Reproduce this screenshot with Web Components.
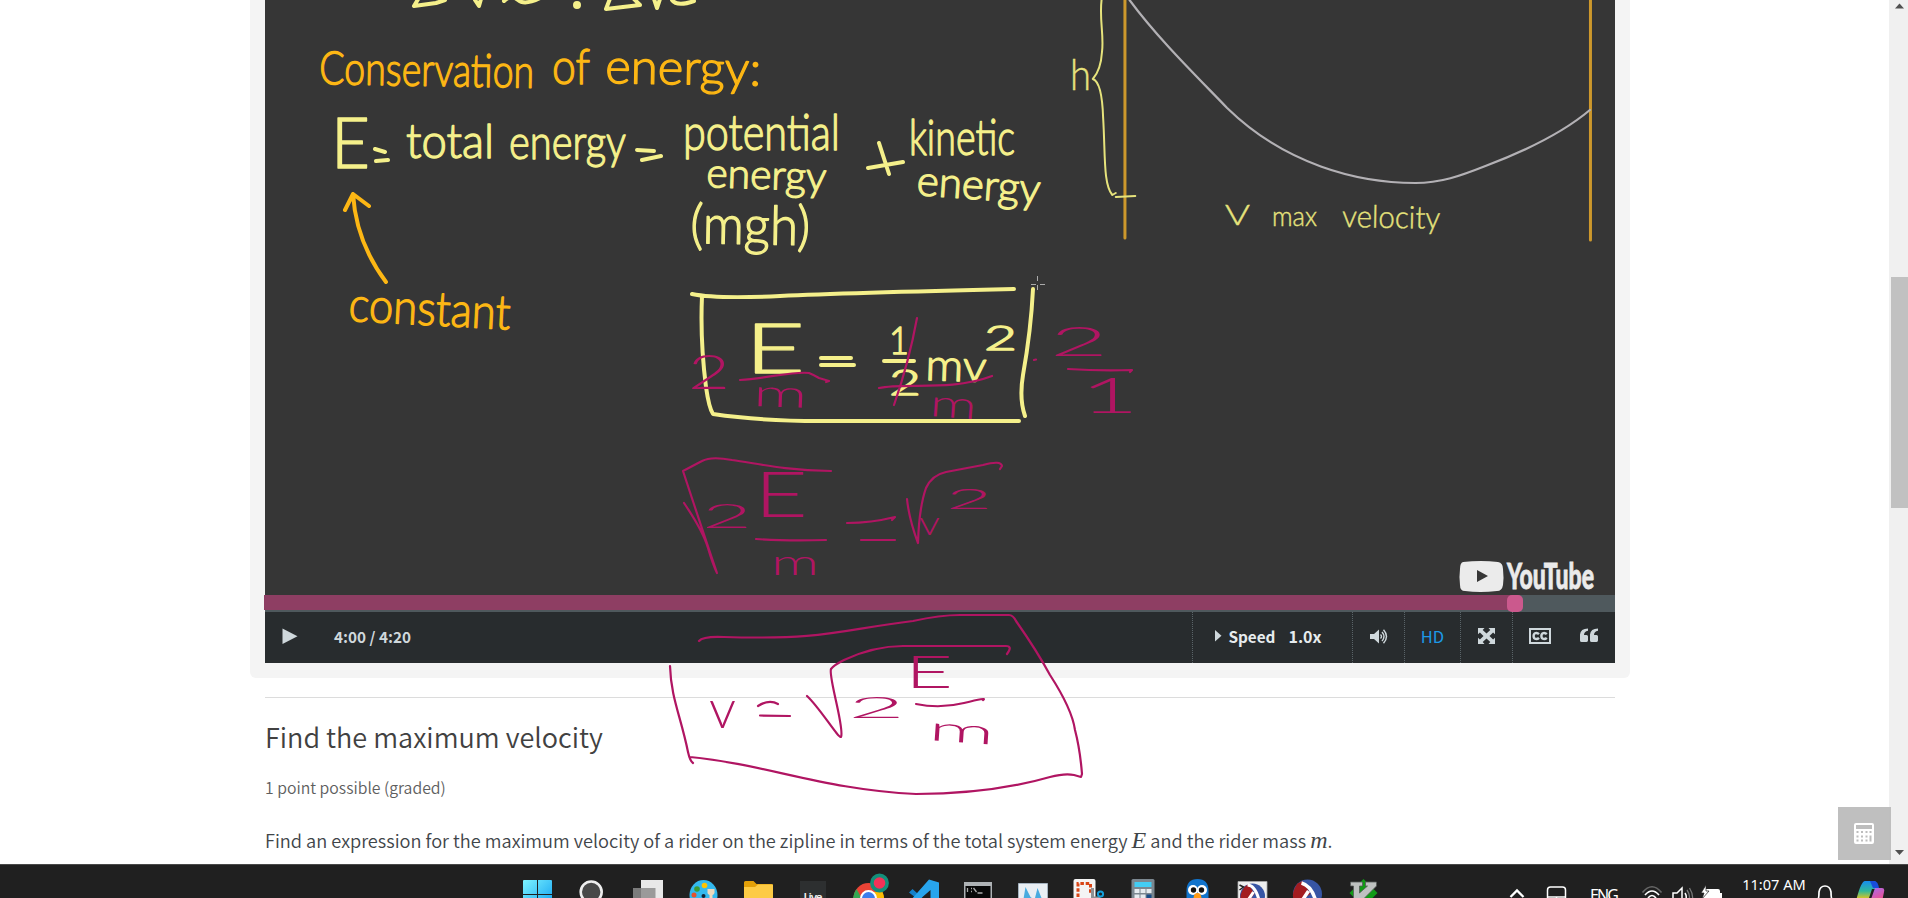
<!DOCTYPE html>
<html lang="en"><head><meta charset="utf-8"><title>Find the maximum velocity</title>
<style>html,body{margin:0;height:100%;overflow:hidden;background:#fff}</style></head>
<body><course-screen></course-screen>
<script>
function define(name, html, after) {
  customElements.define(name, class extends HTMLElement {
    constructor() {
      super();
      const t = document.createElement('template');
      t.innerHTML = html;
      this.attachShadow({mode: 'open'}).append(t.content.cloneNode(true));
      if (after) after(this.shadowRoot, this);
    }
  });
}
// Writes notes as fitted SVG text: [text, x, baseline, width, size, rotation]
function notes(root, sel, list) {
  const g = root.querySelector(sel);
  for (const [s, x, y, w, size, rot] of list) {
    const t = document.createElementNS('http://www.w3.org/2000/svg', 'text');
    t.textContent = s;
    t.setAttribute('x', x); t.setAttribute('y', y);
    t.setAttribute('font-size', size);
    t.setAttribute('textLength', w);
    t.setAttribute('lengthAdjust', 'spacingAndGlyphs');
    if (rot) t.setAttribute('transform', `rotate(${rot} ${x} ${y})`);
    g.append(t);
  }
}

define('video-frame', `
<style>:host{display:block;height:595px;background:#363636}svg{display:block}
text{font-family:Lato,sans-serif}
.pen{font-weight:300;stroke-width:1.300;stroke-linejoin:round}
.l{fill:none;stroke-linecap:round;stroke-linejoin:round}
.l path{vector-effect:non-scaling-stroke}</style>
<svg width="1350" height="595" viewBox="265 0 1350 595">
<g id="orange" class="pen" fill="#fdb714" stroke="#fdb714"></g>
<g id="yellow" class="pen" fill="#f5f08b" stroke="#f5f08b"></g>
<g id="thin" fill="#e6e37c" font-weight="300" stroke="#e6e37c" stroke-width=".4"></g>
<g id="mark" fill="#ebebeb" stroke="#ebebeb" stroke-width=".8" font-weight="900"></g>
<g class="l" stroke="#f5f08b" stroke-width="4">
<path d="M420-4l-6 10 22-3 9-3M475 0l4 6 2-7M504 1q7-7 14-1t24-3M611-4l-5 13 34-4-8-8M654-1l3 9 3-9M672 0q5 7 22 1"/><circle cx="577" cy="5" r="2"/>
<path d="M375 149l10 3M376 161l12-1M637 150l17 1M642 160l19-4M868 168l35-6M879 143l10 31"/>
<path d="M692 294Q716 299 780 296T1014 289M702 296Q700 340 706 387 709 408 713 414 760 421 820 421T1019 421M1033 289Q1031 330 1023 375 1019 399 1025 416"/>
<path d="M821 358h30M821 365h33M884 361h30"/></g>
<path class="l" stroke="#fdb714" stroke-width="4" d="M386 282Q356 242 353 194M345 210l8-16 16 12"/>
<g class="l" transform="translate(1040) scale(1.148 1) translate(-1040)">
<path stroke="#cd982c" stroke-width="3" d="M1114 0V238M1519.500 0V240"/>
<path stroke="#b3b1b5" stroke-width="2.200" d="M1118 0C1143 39 1178 78 1203 108C1253 164 1316 183 1367 183C1389 183 1406 176 1428 166Q1488 140 1519 110"/>
<path stroke="#e6e37c" stroke-width="2" d="M1094-3C1091 16 1096 35 1094 52Q1093 70 1086 79Q1094 82 1095 118C1097 155 1095 184 1103 195l3-2M1106 197l17-1"/></g>
<path stroke="#aaa" stroke-width="1" stroke-dasharray="5 4" d="M1037.500 276v15M1031 284.500h14"/>
<path fill="#ebebeb" fill-rule="evenodd" d="M1463 562q18-2 35 0 5 1 5 7 1 9 0 16-1 6-6 6-17 2-32 0-5 0-5-6-1-9 0-16 0-6 3-7zM1477 570v12l11-6z"/>
</svg>`, r => {
  notes(r, '#orange', [
    ['Conservation', 319, 84, 215, 46, 1], ['of', 552, 84, 38, 50], ['energy:', 605, 83, 156, 48, 1],
    ['constant', 348, 321, 162, 48, 3]]);
  notes(r, '#yellow', [
    ['E', 331, 168, 39, 70], ['total', 406, 158, 88, 48], ['energy', 509, 159, 117, 48],
    ['potential', 683, 150, 157, 50], ['energy', 706, 187, 120, 41, 2], ['(mgh)', 690, 243, 120, 54, 1],
    ['kinetic', 909, 155, 106, 50], ['energy', 916, 195, 124, 42, 4],
    ['E', 745, 373, 60, 68], ['1', 889, 354, 20, 38], ['2', 889, 395, 32, 36],
    ['mv', 925, 380, 61, 44, 2], ['2', 984, 350, 33, 34]]);
  notes(r, '#thin', [
    ['h', 1070, 90, 21, 44], ['V', 1225, 225, 25, 28], ['max', 1272, 226, 45, 28], ['velocity', 1342, 227, 98, 31, 1]]);
  notes(r, '#mark', [['YouTube', 1507, 589, 87, 36]]);
});

define('player-slider', `
<style>:host{display:flex;height:17px;background:#4f595d;position:relative}
.done{width:1251px;height:15px;margin-left:-1px;background:#8e3e63}
.knob{width:16px;height:17px;border-radius:5px;background:#cb598d;margin-left:-8px}</style>
<div class="done"></div><div class="knob"></div>`);

define('player-button', `
<style>:host{display:flex;align-items:center;justify-content:center;height:51px;box-sizing:border-box}
:host([split]){border-left:1px dotted #5a6468}</style><slot></slot>`);

define('player-controls', `
<style>:host{display:flex;height:51px;background:#282c2e;color:#cfd8dc;font:bold 15.300px "Noto Sans CJK SC",sans-serif}
.time{margin-left:19px;width:858px;justify-content:flex-start}
span{line-height:20px;white-space:pre;margin-bottom:4px}svg{display:block;fill:#cfd8dc;margin-bottom:2px}
.speed{color:#e7ecee}</style>
<player-button style="width:50px"><svg width="16" height="17" viewBox="0 0 16 17"><path d="M.500.500v15.500l15-7.700z"/></svg></player-button>
<player-button class="time"><span>4:00 / 4:20</span></player-button>
<player-button split style="width:160px" class="speed"><svg width="7" height="12" viewBox="0 0 7 12" style="margin:0 6px 4px -8px"><path d="M0 0v11.500l6.500-5.700z"/></svg><span>Speed</span><span style="margin-left:13px;font-size:16px">1.0x</span></player-button>
<player-button split style="width:52px"><svg width="18" height="15" viewBox="0 0 18 15"><path d="M0 5h4l5-4.500v14L4 10H0z"/><path fill="none" stroke="#cfd8dc" stroke-width="1.400" d="M10.500 5.500q2 2 0 4M12 3q4 4.500 0 9M13.500.800q6 6.700 0 13.400"/></svg></player-button>
<player-button split style="width:56px;color:#1c9ae8;font:16.500px 'Noto Sans CJK SC',sans-serif"><span>HD</span></player-button>
<player-button split style="width:52px"><svg width="17" height="16" viewBox="0 0 17 16" style="margin-bottom:4px"><path d="M0 0h6.500L4.700 1.900 8.500 5.600l3.800-3.700L10.500 0H17v6.300l-1.900-1.800L11.500 8l3.600 3.500L17 9.700V16h-6.500l1.800-1.900-3.800-3.700-3.800 3.700L6.500 16H0V9.700l1.900 1.800L5.500 8 1.900 4.500 0 6.300z"/></svg></player-button>
<player-button split style="width:54px"><svg width="22" height="16" viewBox="0 0 22 16" style="margin-bottom:4px"><path fill="none" stroke="#cfd8dc" stroke-width="2" d="M1 1h20v14H1z"/><path fill="none" stroke="#cfd8dc" stroke-width="2.400" d="M10 6.200Q8.500 4.700 6.500 5.100 4.600 5.600 4.600 8t1.900 2.900Q8.500 11.300 10 9.800M17.800 6.200Q16.300 4.700 14.300 5.100 12.400 5.600 12.400 8t1.900 2.900Q16.300 11.300 17.800 9.800"/></svg></player-button>
<player-button style="width:46px"><svg width="18" height="14" viewBox="0 0 18 14" style="margin-bottom:5px"><path d="M8 .500v2.300Q4 3.500 4 7h2.500q1.500 0 1.500 1.500v3.700Q8 14 6.500 14H1.700Q0 14 0 12.500V6.500Q.500.500 8 .500zM18 .500v2.300Q14 3.500 14 7h2.500q1.500 0 1.500 1.500v3.700Q18 14 16.500 14h-4.800Q10 14 10 12.500V6.500Q10.500.500 18 .500z"/></svg></player-button>`);

define('video-player', `
<style>:host{display:block;width:1350px;padding:0 15px 15px;background:#f4f4f4;border-radius:0 0 6px 6px;margin-left:250px}</style>
<video-frame></video-frame><player-slider></player-slider><player-controls></player-controls>`);

define('problem-text', `
<style>:host{display:block;margin:19px 0 0 265px;width:1350px;border-top:1px solid #dcdcdc;font-family:"Noto Sans CJK SC","Noto Sans",sans-serif;color:#414141}
h2{font-size:27.050px;font-weight:350;line-height:36px;margin:21px 0 0;white-space:nowrap}
.p{font-size:15.800px;line-height:22px;margin-top:22px;color:#5e5e5e;font-weight:350}
p{font-size:18.200px;line-height:26px;margin:28px 0 0;white-space:nowrap;color:#3f4549;font-weight:350}
i{font:italic 24px/20px "Liberation Serif",serif}</style>
<h2><span>Find the maximum velocity</span></h2><div class="p"><span>1 point possible (graded)</span></div>
<p><span>Find an expression for the maximum velocity of a rider on the zipline in terms of the total system energy </span><i>E</i><span> and the rider mass </span><i>m</i>.</p>`);

define('page-scrollbar', `
<style>:host{display:flex;flex-direction:column;width:19px;height:864px;background:#f0f0f0}
svg{display:block;margin-left:6px}.thumb{height:231px;width:17px;margin:267px 0 340px 2px;background:#c1c1c1}</style>
<svg width="10" height="10" viewBox="0 0 10 10"><path fill="#505050" d="M0 8.500L4.500 3.500 9 8.500z"/></svg>
<div class="thumb"></div>
<svg width="10" height="16" viewBox="0 0 10 16"><path fill="#505050" d="M0 2L4.500 7 9 2z"/></svg>`);

define('calculator-toggle', `
<style>:host{display:flex;align-items:center;justify-content:center;position:absolute;left:1838px;top:807px;width:53px;height:53px;background:rgba(184,184,184,.9)}</style>
<svg width="20" height="21" viewBox="0 0 20 21" style="margin-right:2px"><rect width="20" height="21" rx="2" fill="#fff"/><g fill="#bdbdbd"><path d="M2 2h16v4H2z"/><path d="M2.500 8h2v2h-2zM7 8h2v2H7zM11.500 8h2v2h-2zM15.500 8h2v2h-2zM2.500 12.500h2v2h-2zM7 12.500h2v2H7zM11.500 12.500h2v2h-2zM15.500 12.500h2v6h-2zM2.500 16.500h2v2h-2zM7 16.500h2v2H7zM11.500 16.500h2v2h-2z"/></g></svg>`);

define('pen-layer', `
<style>:host{display:block;position:absolute;left:0;top:0;width:1889px;height:864px;pointer-events:none}
svg{display:block}path{fill:none;stroke:#b01562;stroke-width:2.200;stroke-linecap:round;stroke-linejoin:round}
text{font-family:Lato,sans-serif;font-weight:300;fill:#b01562}</style>
<svg width="1889" height="864" viewBox="0 0 1889 864">
<path d="M740 380C770 378 793 371 809 373Q814 375 819 378L829 381 826 382M917 318Q909 362 894 405M879 388C905 382 950 392 992 376M1034 360l2-.500M1068 369Q1100 371 1132 370L1130 372"/>
<path d="M684 503Q703 531 708 548T717 573Q710 553 683 471L702 461Q711 456 732 460C760 464 784 470 831 471M756 539Q785 541 826 540M847 523Q871 523 895 517L892 520M861 540H895M907 499Q909 519 918 543Q919 508 926 488Q932 475 946 472L983 465Q1001 460 1002 466L1000 469"/>
<path d="M699 641Q703 636 724 637C828 640 839 630 913 621Q940 615 960 615H1009Q1013 615 1016 621Q1037 651 1050 675Q1072 709 1075 730Q1080 749 1082 774L1081 777 1074 775Q1065 773 1050 777Q991 794 916 794C825 790 765 764 690 757M670 666C671 698 681 717 688 752Q690 761 693 763"/>
<path d="M807 696C820 708 838 738 841 737C845 729 828 676 831 669Q834 665 844 660Q874 646 903 646H1006Q1013 646 1007 654M758 706Q769 699 778 704M760 715.500L790 716M916 704Q940 709 964 703T983 700"/>
<g id="n"></g></svg>`, r => notes(r, '#n', [
  ['2', 688, 389, 42, 48], ['m', 753, 406, 54, 38, 2], ['m', 929, 416, 47, 38, 4],
  ['2', 1050, 356, 58, 41], ['1', 1080, 413, 59, 49],
  ['2', 702, 528, 50, 33], ['E', 754, 517, 54, 63], ['m', 771, 575, 48, 36],
  ['v', 919, 535, 21, 33], ['2', 946, 509, 46, 28],
  ['v', 709, 728, 27, 53], ['2', 848, 718, 57, 29], ['E', 905, 688, 48, 45], ['m', 928, 740, 66, 34, 4]]));

const ART = {
win:'<defs><linearGradient id="w" x2="1" y2="1"><stop stop-color="#7df3ff"/><stop offset="1" stop-color="#0c9cf0"/></linearGradient></defs><path fill="url(#w)" d="M-14.500 17q0-1 1-1H-.500V30H-14.500zM.500 16H13.500q1 0 1 1V30H.500zM-14.500 31H-.500V45H-14.500zM.500 31H14.500V45H.500z"/>',
search:'<circle cx="-1.300" cy="28" r="10.500" fill="#484848" stroke="#eee" stroke-width="2.600"/>',
view:'<path fill="#e8e8e8" d="M-6.500 16H15.500V40H-6.500z"/><path fill="#8c8c8c" opacity=".85" d="M-14.500 24H8V40H-14.500z"/>',
paint:'<ellipse cx="1" cy="31" rx="14" ry="15" fill="#34b9ee"/><circle cx="2" cy="21.500" r="2.800" fill="#ffc400"/><circle cx="-5.500" cy="25" r="2.800" fill="#3c9b35"/><circle cx="-8.500" cy="31" r="2.500" fill="#e5532d"/><circle cx="1" cy="32" r="2" fill="#123"/><path fill="#eed9bd" d="M5 25h7v4q-1 2-2 2v4H7v-4q-2-1-2-2z"/>',
folder:'<path fill="#e3a008" d="M-13.500 18.500q0-1.500 1.500-1.500h8L-1 20H14q1.500 0 1.500 2v8h-29z"/><path fill="#fdcb45" d="M-13.500 23h11l3-2.500h15V36h-29z"/>',
live:'<rect x="-12.500" y="17" width="26" height="30" fill="#2d2f30"/><text x="-9" y="37" font-size="11.500" font-weight="600" fill="#eee" textLength="19">Live</text>',
chrome:'<circle cx="1" cy="34" r="15" fill="#ea4335"/><path fill="#34a853" d="M-11 25L-1 43-5 49-14 41Q-16 32-11 25z"/><path fill="#fbbc05" d="M5 28H15Q19 36 13 45H2z"/><circle cx="1" cy="34.500" r="7.500" fill="#3b7ded" stroke="#fff" stroke-width="2"/><circle cx="12" cy="19" r="7.600" fill="#f23258" stroke="#138f7a" stroke-width="3.600"/>',
code:'<path fill="#1580c9" d="M-13.500 28.500L-10 25 9 42V34L-4 36z"/><path fill="#28a5ee" d="M6.500 15.500L16.500 18.500V40H8V26L-8 40-12 36.500z"/>',
cmd:'<path fill="#aeb2b5" d="M-13.500 18h28v22h-28z"/><path fill="#090909" d="M-12 22h25v20h-25z"/><path stroke="#aaa" stroke-width="1.300" d="M-10 24v4M-6.500 24.500h1M-6.500 27.500h1M-4 24l3 4M0 29h5"/>',
chart:'<path fill="#e9eef3" stroke="#a5b3c0" d="M-14 19.500h29v18h-29z"/><path fill="#49abdf" d="M-9 35l2-12 5 10 4 3 3-12 4 10 3 3v4h-21z"/>',
snip:'<rect x="-14" y="15" width="22" height="26" rx="2" fill="#f4f4f4"/><path fill="none" stroke="#d84516" stroke-width="3" stroke-dasharray="3.500 1.800" d="M-9.500 33V19.500H3V30"/><path fill="none" stroke="#8d9195" stroke-width="3" d="M5 24v10h8"/><circle cx="13" cy="30" r="2.600" fill="none" stroke="#149fdb" stroke-width="2"/>',
calc:'<rect x="-11" y="15" width="23" height="28" rx="1.500" fill="#7b8790"/><path fill="#42cdf4" d="M-8 18H9v5H-8z"/><path fill="#e5ebef" d="M-8 25h5v4h-5zM-2 25h5v4h-5zM4 25h5v4H4zM-8 30.500h5v5h-5zM-2 30.500h5v5h-5z"/><path fill="#174b86" d="M4 30.500h5v5H4z"/>',
bird:'<path fill="#1274cc" d="M-11 40V27Q-11 15 0 15T11 27V40z"/><circle cx="-4.500" cy="26" r="5" fill="#fff"/><circle cx="4.500" cy="26" r="5" fill="#fff"/><circle cx="-4" cy="26" r="2.700" fill="#111"/><circle cx="4" cy="26" r="2.700" fill="#111"/><path fill="#ff9a16" d="M-4 35q0-6 4-6t4 6z"/>',
racketc:'<path fill="#eee" stroke="#aaa" stroke-width=".800" d="M-14.500 17.500h29v23h-29z"/><circle cx="0" cy="32" r="12.500" fill="#3755a5"/><path fill="#a31c20" d="M-8 23Q-17 36-6 40L2 30-4 20z"/><path fill="none" stroke="#fff" stroke-width="3" d="M-5 21Q3 21 7 38M1 28L-7 40"/><path fill="none" stroke="#222" stroke-width="1.500" d="M-13 21l4 2-4 3"/>',
racket:'<circle cx="0" cy="30" r="14.500" fill="#3755a5"/><path fill="#a31c20" d="M-10 19.500Q-18 30-12 40L3 30-5 17z"/><path fill="none" stroke="#fff" stroke-width="3.500" d="M-6 19Q5 22 9 40M1 27L-9 42"/>',
vim:'<path fill="#129a16" d="M1 15l14 14L1 43-13 29z"/><path fill="#bfc2c1" stroke="#575b59" stroke-width=".800" d="M-12 18H0v4h-3v7l8-7H3v-4h11v4L-4 40h-5V22h-3z"/>',
up:'<path fill="none" stroke="#fff" stroke-width="2.300" d="M-6.500 33L0 26.500 6.500 33"/>',
pad:'<path fill="none" stroke="#fff" stroke-width="1.500" d="M-9 36V26q0-3 3-3H6q3 0 3 3v10M-9 33H9M0 33v5"/>',
eng:'<text x="-14.500" y="37" font-size="16" fill="#fff" textLength="29">ENG</text>',
wifi:'<g fill="none" stroke="#fff" stroke-width="1.700"><path stroke="#666" d="M-9.500 28.500Q0 17 9.500 28.500"/><path d="M-7 31Q0 23 7 31M-4 34Q0 29 4 34"/></g>',
vol:'<path fill="none" stroke="#fff" stroke-width="1.500" d="M-9 29h4l5-5v18l-5-5h-4zM3 29q2.500 4 0 8"/><path fill="none" stroke="#777" stroke-width="1.300" d="M5 26q5 7 0 14M7.500 24q5 8 2 15"/>',
bat:'<path fill="#fff" d="M-6 25H6q2 0 2 2v2h2v8H8v3H-9V32l3-3z"/><path fill="#fff" stroke="#202020" stroke-width=".700" d="M-6 21l-5 8h3l-2 6 7-8h-3z"/>',
bell:'<path fill="none" stroke="#fff" stroke-width="1.700" d="M-7.500 36Q-6 35-6 28Q-5 22 0 22T6 28Q6 35 7.500 36"/>',
pilot:'<defs><linearGradient id="c" x2="0" y2="1"><stop stop-color="#168df0"/><stop offset=".5" stop-color="#30b99a"/><stop offset=".9" stop-color="#e7c51b"/></linearGradient><linearGradient id="d" x2=".5" y2="1"><stop stop-color="#a56df3"/><stop offset="1" stop-color="#f04e8d"/></linearGradient></defs><path fill="url(#c)" d="M-15 37Q-10 17-6 17H3q3 0 2 5L4 25H1L-3 37z"/><path fill="#184dda" d="M-1 17H3q4 0 5 7H2z"/><path fill="url(#d)" d="M4 24H11Q14 24 13 28L11 38H-1z"/>'
};

define('task-icon', `
<style>:host{display:block;flex:none;height:33px}svg{display:block;overflow:visible}text{font-family:"Noto Sans",sans-serif}</style><svg height="33"></svg>`);
function icon(name, w = 55) {
  const el = document.createElement('task-icon');
  const svg = el.shadowRoot.querySelector('svg');
  el.style.width = w + 'px';
  svg.setAttribute('width', w);
  svg.setAttribute('viewBox', `${-w / 2} 1 ${w} 33`);
  svg.innerHTML = ART[name];
  return el;
}

define('task-bar', `
<style>:host{display:flex;height:33px;border-top:1px solid #494949;background:#202020;overflow:hidden}
.apps{display:flex;margin-left:510px}.tray{display:flex;margin-left:111px}
.clock{width:78px;text-align:center;white-space:nowrap;color:#fff;font:14.600px/22px "Noto Sans",sans-serif;margin-top:8px}</style>
<div class="apps"></div><div class="tray"></div>`, r => {
  for (const n of 'win search view paint folder live chrome code cmd chart snip calc bird racketc racket vim'.split(' ')) r.querySelector('.apps').append(icon(n));
  const tray = r.querySelector('.tray');
  for (const [n, w] of [['up', 32], ['pad', 47], ['eng', 49], ['wifi', 46], ['vol', 14], ['bat', 46]]) tray.append(icon(n, w));
  const c = document.createElement('div'); c.className = 'clock'; c.innerHTML = '<span>11:07 AM</span>'; tray.append(c);
  tray.append(icon('bell', 24), icon('pilot', 68));
});

define('course-screen', `
<style>:host{display:block;width:1908px;height:898px;overflow:hidden;position:relative;background:#fff}
.view{display:flex;height:864px}.page{flex:1;min-width:0;overflow:hidden}</style>
<div class="view"><div class="page"><video-player></video-player><problem-text></problem-text></div><page-scrollbar></page-scrollbar></div>
<pen-layer></pen-layer><calculator-toggle></calculator-toggle><task-bar></task-bar>`);
</script></body></html>
